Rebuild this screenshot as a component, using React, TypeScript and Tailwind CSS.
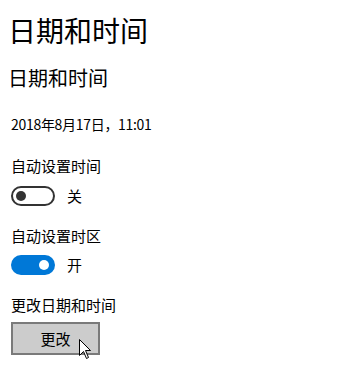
import React from "react";

const FONT = "font-['Segoe_UI','Noto_Sans_CJK_SC','Noto_Sans',sans-serif]";

function Toggle({ on }: { on: boolean }) {
  return (
    <div
      className={
        on
          ? "relative h-[20px] w-[44px] rounded-full bg-[#0078d7]"
          : "relative h-[20px] w-[44px] rounded-full border-2 border-[#333333] bg-white"
      }
    >
      <span
        className={
          on
            ? "absolute right-[6px] top-[5px] h-[10px] w-[10px] rounded-full bg-white"
            : "absolute left-[3px] top-[3px] h-[10px] w-[10px] rounded-full bg-[#333333]"
        }
      />
    </div>
  );
}

function Cursor() {
  return (
    <svg
      className="pointer-events-none absolute left-[66px] top-[15px]"
      width="13"
      height="21"
      viewBox="0 0 13 21"
      aria-hidden="true"
    >
      <path
        d="M0.5 0.5 L0.5 16.5 L4.5 12.5 L7.5 19.5 L9.5 18.5 L6.5 11.5 L11.5 11.5 Z"
        fill="#ffffff"
        stroke="#000000"
        strokeWidth="1"
        strokeLinejoin="miter"
      />
    </svg>
  );
}

export default function App() {
  return (
    <div className={`min-h-[373px] w-[347px] bg-white text-black ${FONT}`}>
      <h1 className="mt-[10px] pl-[8px] text-[28px] font-normal leading-[40px]">日期和时间</h1>
      <h2 className="mt-[14px] pl-[8px] text-[20px] font-normal leading-[28px]">日期和时间</h2>

      <div className="pl-[11px]">
        <p className="mt-[22px] text-[14px] leading-[20px] tracking-[-0.3px]">2018年8月17日，11:01</p>

        <p className="mt-[22px] text-[15px] leading-[20px]">自动设置时间</p>
        <div className="mt-[10px] flex items-center gap-[12px]">
          <Toggle on={false} />
          <span className="text-[15px] leading-[20px]">关</span>
        </div>

        <p className="mt-[20px] text-[15px] leading-[20px]">自动设置时区</p>
        <div className="mt-[9px] flex items-center gap-[12px]">
          <Toggle on />
          <span className="text-[15px] leading-[20px]">开</span>
        </div>

        <p className="mt-[20px] text-[15px] leading-[20px]">更改日期和时间</p>
        <button className="relative mt-[7px] flex h-[33px] w-[89px] items-center justify-center border-2 border-[#7a7a7a] bg-[#cccccc] text-[15px] leading-[20px]">
          更改
          <Cursor />
        </button>
      </div>
    </div>
  );
}
